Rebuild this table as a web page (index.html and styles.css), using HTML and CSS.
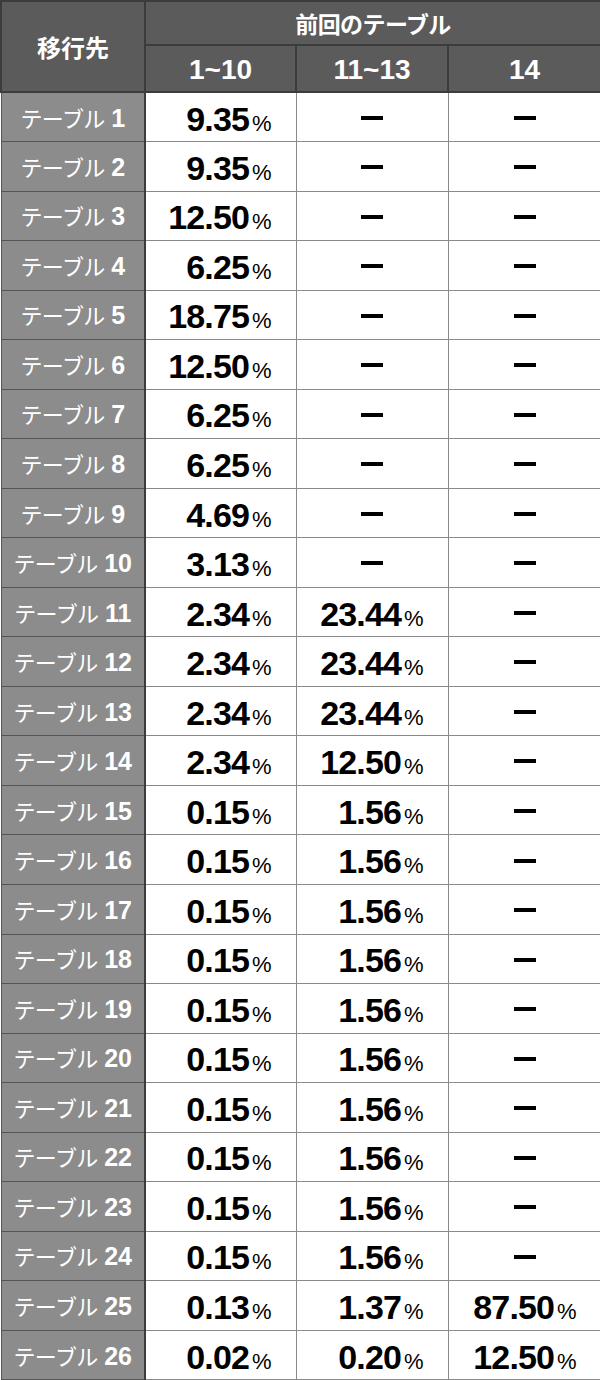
FILE: index.html
```html
<!DOCTYPE html>
<html lang="ja">
<head>
<meta charset="utf-8">
<link rel="stylesheet" href="styles.css">
</head>
<body>
<table class="rate">
  <colgroup>
    <col class="c-label"><col class="c-a"><col class="c-b"><col class="c-c">
  </colgroup>
  <thead>
    <tr class="h1">
      <th rowspan="2" class="corner">移行先</th>
      <th colspan="3" class="group">前回のテーブル</th>
    </tr>
    <tr class="h2">
      <th class="sub">1~10</th>
      <th class="sub">11~13</th>
      <th class="sub">14</th>
    </tr>
  </thead>
  <tbody>
    <tr><td class="label"><span class="jp">テーブル</span> <span class="n">1</span></td><td class="val"><span class="num">9.35</span><span class="pct">%</span></td><td class="none"><span class="dash"></span></td><td class="none"><span class="dash"></span></td></tr>
    <tr><td class="label"><span class="jp">テーブル</span> <span class="n">2</span></td><td class="val"><span class="num">9.35</span><span class="pct">%</span></td><td class="none"><span class="dash"></span></td><td class="none"><span class="dash"></span></td></tr>
    <tr><td class="label"><span class="jp">テーブル</span> <span class="n">3</span></td><td class="val"><span class="num">12.50</span><span class="pct">%</span></td><td class="none"><span class="dash"></span></td><td class="none"><span class="dash"></span></td></tr>
    <tr><td class="label"><span class="jp">テーブル</span> <span class="n">4</span></td><td class="val"><span class="num">6.25</span><span class="pct">%</span></td><td class="none"><span class="dash"></span></td><td class="none"><span class="dash"></span></td></tr>
    <tr><td class="label"><span class="jp">テーブル</span> <span class="n">5</span></td><td class="val"><span class="num">18.75</span><span class="pct">%</span></td><td class="none"><span class="dash"></span></td><td class="none"><span class="dash"></span></td></tr>
    <tr><td class="label"><span class="jp">テーブル</span> <span class="n">6</span></td><td class="val"><span class="num">12.50</span><span class="pct">%</span></td><td class="none"><span class="dash"></span></td><td class="none"><span class="dash"></span></td></tr>
    <tr><td class="label"><span class="jp">テーブル</span> <span class="n">7</span></td><td class="val"><span class="num">6.25</span><span class="pct">%</span></td><td class="none"><span class="dash"></span></td><td class="none"><span class="dash"></span></td></tr>
    <tr><td class="label"><span class="jp">テーブル</span> <span class="n">8</span></td><td class="val"><span class="num">6.25</span><span class="pct">%</span></td><td class="none"><span class="dash"></span></td><td class="none"><span class="dash"></span></td></tr>
    <tr><td class="label"><span class="jp">テーブル</span> <span class="n">9</span></td><td class="val"><span class="num">4.69</span><span class="pct">%</span></td><td class="none"><span class="dash"></span></td><td class="none"><span class="dash"></span></td></tr>
    <tr><td class="label"><span class="jp">テーブル</span> <span class="n">10</span></td><td class="val"><span class="num">3.13</span><span class="pct">%</span></td><td class="none"><span class="dash"></span></td><td class="none"><span class="dash"></span></td></tr>
    <tr><td class="label"><span class="jp">テーブル</span> <span class="n">11</span></td><td class="val"><span class="num">2.34</span><span class="pct">%</span></td><td class="val"><span class="num">23.44</span><span class="pct">%</span></td><td class="none"><span class="dash"></span></td></tr>
    <tr><td class="label"><span class="jp">テーブル</span> <span class="n">12</span></td><td class="val"><span class="num">2.34</span><span class="pct">%</span></td><td class="val"><span class="num">23.44</span><span class="pct">%</span></td><td class="none"><span class="dash"></span></td></tr>
    <tr><td class="label"><span class="jp">テーブル</span> <span class="n">13</span></td><td class="val"><span class="num">2.34</span><span class="pct">%</span></td><td class="val"><span class="num">23.44</span><span class="pct">%</span></td><td class="none"><span class="dash"></span></td></tr>
    <tr><td class="label"><span class="jp">テーブル</span> <span class="n">14</span></td><td class="val"><span class="num">2.34</span><span class="pct">%</span></td><td class="val"><span class="num">12.50</span><span class="pct">%</span></td><td class="none"><span class="dash"></span></td></tr>
    <tr><td class="label"><span class="jp">テーブル</span> <span class="n">15</span></td><td class="val"><span class="num">0.15</span><span class="pct">%</span></td><td class="val"><span class="num">1.56</span><span class="pct">%</span></td><td class="none"><span class="dash"></span></td></tr>
    <tr><td class="label"><span class="jp">テーブル</span> <span class="n">16</span></td><td class="val"><span class="num">0.15</span><span class="pct">%</span></td><td class="val"><span class="num">1.56</span><span class="pct">%</span></td><td class="none"><span class="dash"></span></td></tr>
    <tr><td class="label"><span class="jp">テーブル</span> <span class="n">17</span></td><td class="val"><span class="num">0.15</span><span class="pct">%</span></td><td class="val"><span class="num">1.56</span><span class="pct">%</span></td><td class="none"><span class="dash"></span></td></tr>
    <tr><td class="label"><span class="jp">テーブル</span> <span class="n">18</span></td><td class="val"><span class="num">0.15</span><span class="pct">%</span></td><td class="val"><span class="num">1.56</span><span class="pct">%</span></td><td class="none"><span class="dash"></span></td></tr>
    <tr><td class="label"><span class="jp">テーブル</span> <span class="n">19</span></td><td class="val"><span class="num">0.15</span><span class="pct">%</span></td><td class="val"><span class="num">1.56</span><span class="pct">%</span></td><td class="none"><span class="dash"></span></td></tr>
    <tr><td class="label"><span class="jp">テーブル</span> <span class="n">20</span></td><td class="val"><span class="num">0.15</span><span class="pct">%</span></td><td class="val"><span class="num">1.56</span><span class="pct">%</span></td><td class="none"><span class="dash"></span></td></tr>
    <tr><td class="label"><span class="jp">テーブル</span> <span class="n">21</span></td><td class="val"><span class="num">0.15</span><span class="pct">%</span></td><td class="val"><span class="num">1.56</span><span class="pct">%</span></td><td class="none"><span class="dash"></span></td></tr>
    <tr><td class="label"><span class="jp">テーブル</span> <span class="n">22</span></td><td class="val"><span class="num">0.15</span><span class="pct">%</span></td><td class="val"><span class="num">1.56</span><span class="pct">%</span></td><td class="none"><span class="dash"></span></td></tr>
    <tr><td class="label"><span class="jp">テーブル</span> <span class="n">23</span></td><td class="val"><span class="num">0.15</span><span class="pct">%</span></td><td class="val"><span class="num">1.56</span><span class="pct">%</span></td><td class="none"><span class="dash"></span></td></tr>
    <tr><td class="label"><span class="jp">テーブル</span> <span class="n">24</span></td><td class="val"><span class="num">0.15</span><span class="pct">%</span></td><td class="val"><span class="num">1.56</span><span class="pct">%</span></td><td class="none"><span class="dash"></span></td></tr>
    <tr><td class="label"><span class="jp">テーブル</span> <span class="n">25</span></td><td class="val"><span class="num">0.13</span><span class="pct">%</span></td><td class="val"><span class="num">1.37</span><span class="pct">%</span></td><td class="val"><span class="num">87.50</span><span class="pct">%</span></td></tr>
    <tr><td class="label"><span class="jp">テーブル</span> <span class="n">26</span></td><td class="val"><span class="num">0.02</span><span class="pct">%</span></td><td class="val"><span class="num">0.20</span><span class="pct">%</span></td><td class="val"><span class="num">12.50</span><span class="pct">%</span></td></tr>
  </tbody>
</table>
</body>
</html>
```

FILE: styles.css
```css
html, body {
  margin: 0;
  padding: 0;
  background: #ffffff;
}

.rate {
  width: 600px;
  height: 1380px;
  border-collapse: collapse;
  table-layout: fixed;
  font-family: "Liberation Sans", "Noto Sans CJK JP", sans-serif;
}

.c-label { width: 144px; }
.c-a { width: 151px; }
.c-b { width: 152px; }
.c-c { width: 153px; }

th {
  background: #5b5b5b;
  color: #ffffff;
  font-weight: bold;
  border: 2px solid #3c3c3c;
  padding: 0;
  text-align: center;
  vertical-align: middle;
}

.h1 { height: 44px; }
.h2 { height: 47px; }

.corner,
.group {
  font-family: "Noto Sans CJK JP", sans-serif;
  font-size: 24px;
  font-weight: bold;
  line-height: 1;
}

.group {
  font-size: 23px;
  letter-spacing: -0.6px;
}

.sub {
  font-family: "Liberation Sans", sans-serif;
  font-size: 28px;
  line-height: 1;
  padding-top: 2px;
}

tbody tr { height: 49.54px; }

td {
  padding: 0;
  vertical-align: middle;
  border: 1px solid #8a8a8a;
  line-height: 1;
}

.label {
  background: #8c8c8c;
  color: #ffffff;
  text-align: center;
  border-color: #555555;
  border-right: 2px solid #3c3c3c;
  white-space: nowrap;
  padding-top: 2px;
}

.jp {
  font-family: "Noto Sans CJK JP", sans-serif;
  font-size: 22px;
  font-weight: normal;
  letter-spacing: -0.6px;
  margin-right: 2px;
}

.n {
  font-family: "Liberation Sans", sans-serif;
  font-size: 25px;
  font-weight: bold;
}

.val {
  text-align: right;
  padding-right: 24px;
  color: #000000;
  white-space: nowrap;
  padding-top: 3px;
}

.num {
  font-size: 34px;
  font-weight: bold;
  letter-spacing: -0.9px;
}

.pct {
  font-size: 22px;
  font-weight: normal;
  margin-left: 3px;
}

.none {
  text-align: center;
}

.dash {
  display: inline-block;
  width: 22px;
  height: 4px;
  background: #000000;
  vertical-align: middle;
}
```
